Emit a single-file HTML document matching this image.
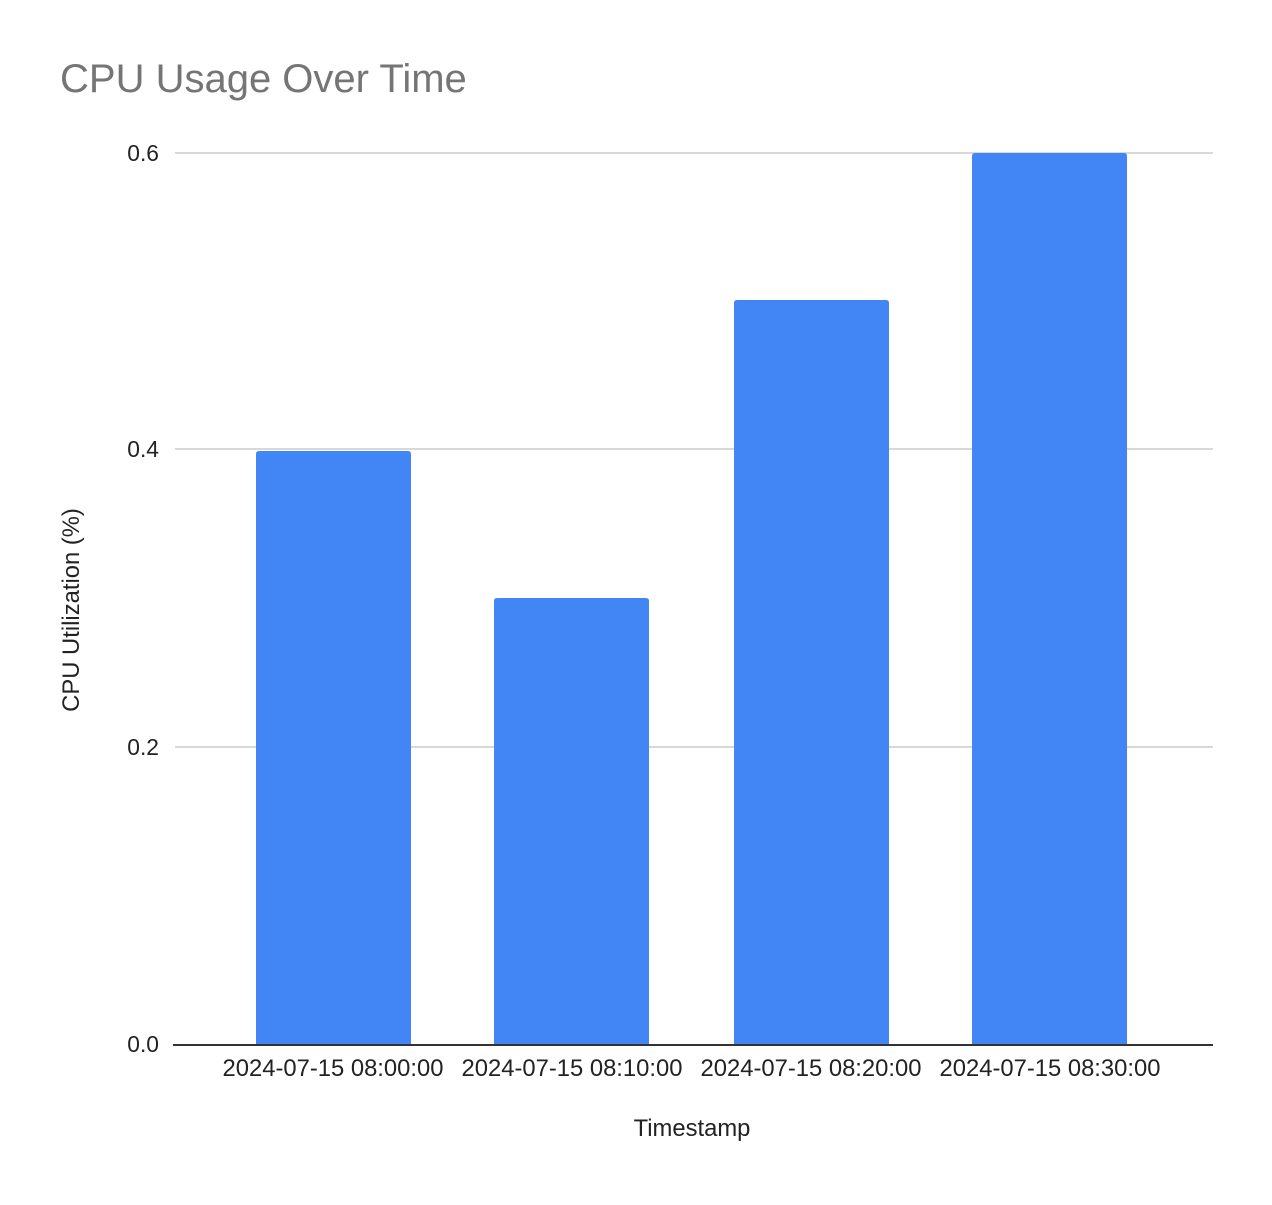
<!DOCTYPE html>
<html><head><style>html,body{margin:0;padding:0;background:#fff}</style></head>
<body>
<svg width="1272" height="1200" xmlns="http://www.w3.org/2000/svg" font-family="Liberation Sans, Arial, sans-serif">
<rect width="1272" height="1200" fill="#fff"/>
<text x="60" y="92" font-size="40" fill="#757575">CPU Usage Over Time</text>
<g stroke="#cccccc" stroke-width="1.5">
<line x1="175" y1="153" x2="1213" y2="153"/>
<line x1="175" y1="449" x2="1213" y2="449"/>
<line x1="175" y1="747" x2="1213" y2="747"/>
</g>
<g fill="#4285f4">
<path d="M256 1045V454q0-3 3-3h149q3 0 3 3V1045z"/>
<path d="M494 1045V601q0-3 3-3h149q3 0 3 3V1045z"/>
<path d="M734 1045V303q0-3 3-3h149q3 0 3 3V1045z"/>
<path d="M972 1045V156q0-3 3-3h149q3 0 3 3V1045z"/>
</g>
<line x1="173" y1="1045" x2="1213" y2="1045" stroke="#333" stroke-width="2"/>
<g font-size="22.8" fill="#222" text-anchor="end">
<text x="159" y="161">0.6</text>
<text x="159" y="457">0.4</text>
<text x="159" y="755">0.2</text>
<text x="159" y="1052">0.0</text>
</g>
<g font-size="23.8" fill="#222" text-anchor="middle">
<text x="333" y="1076">2024-07-15 08:00:00</text>
<text x="572" y="1076">2024-07-15 08:10:00</text>
<text x="811" y="1076">2024-07-15 08:20:00</text>
<text x="1050" y="1076">2024-07-15 08:30:00</text>
<text x="692" y="1136">Timestamp</text>
<text transform="translate(79,610) rotate(-90)">CPU Utilization (%)</text>
</g>
</svg>
</body></html>
